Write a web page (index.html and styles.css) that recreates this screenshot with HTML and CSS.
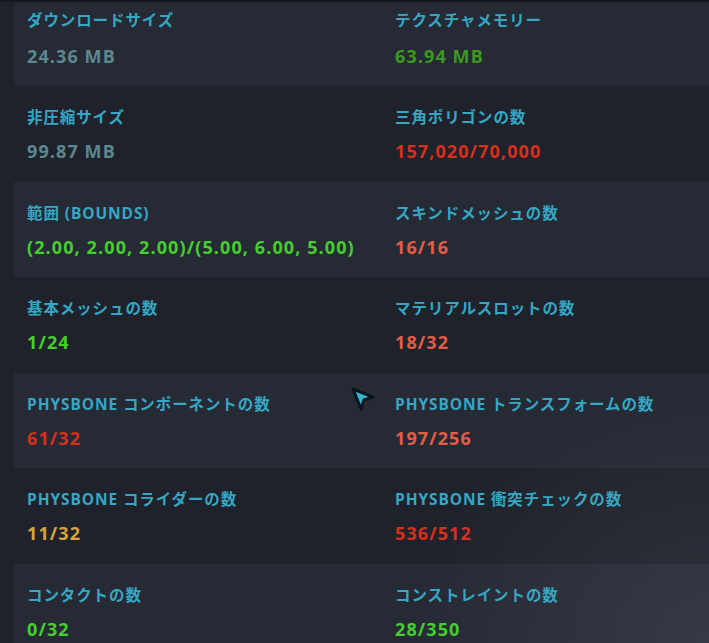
FILE: index.html
```html
<!DOCTYPE html>
<html lang="ja">
<head>
<meta charset="utf-8">
<link rel="stylesheet" href="styles.css">
</head>
<body>
<div class="topbar"></div>
<div class="list">
  <div class="row row--odd row--first">
    <div class="cell"><div class="label">ダウンロードサイズ</div><div class="value v-gray">24.36 MB</div></div>
    <div class="cell"><div class="label">テクスチャメモリー</div><div class="value v-dgreen">63.94 MB</div></div>
  </div>
  <div class="row">
    <div class="cell"><div class="label">非圧縮サイズ</div><div class="value v-gray">99.87 MB</div></div>
    <div class="cell"><div class="label">三角ポリゴンの数</div><div class="value v-red">157,020/70,000</div></div>
  </div>
  <div class="row row--odd">
    <div class="cell"><div class="label">範囲 (BOUNDS)</div><div class="value v-green">(2.00, 2.00, 2.00)/(5.00, 6.00, 5.00)</div></div>
    <div class="cell"><div class="label">スキンドメッシュの数</div><div class="value v-salmon">16/16</div></div>
  </div>
  <div class="row">
    <div class="cell"><div class="label">基本メッシュの数</div><div class="value v-green">1/24</div></div>
    <div class="cell"><div class="label">マテリアルスロットの数</div><div class="value v-salmon">18/32</div></div>
  </div>
  <div class="row row--odd">
    <div class="cell"><div class="label">PHYSBONE コンポーネントの数</div><div class="value v-red">61/32</div></div>
    <div class="cell"><div class="label">PHYSBONE トランスフォームの数</div><div class="value v-salmon">197/256</div></div>
  </div>
  <div class="row">
    <div class="cell"><div class="label">PHYSBONE コライダーの数</div><div class="value v-yellow">11/32</div></div>
    <div class="cell"><div class="label">PHYSBONE 衝突チェックの数</div><div class="value v-red">536/512</div></div>
  </div>
  <div class="row row--odd">
    <div class="cell"><div class="label">コンタクトの数</div><div class="value v-green">0/32</div></div>
    <div class="cell"><div class="label">コンストレイントの数</div><div class="value v-green">28/350</div></div>
  </div>
</div>
<svg class="cursor" width="26" height="26" viewBox="0 0 26 26">
  <path d="M3 3 L23 11 L14 14 L11 23 Z" fill="#39b3d3" stroke="#0b161b" stroke-width="3" stroke-linejoin="round"/>
</svg>
<div class="vignette"></div>
</body>
</html>
```
FILE: styles.css
```css
html, body {
  margin: 0;
  padding: 0;
}
body {
  width: 709px;
  height: 643px;
  overflow: hidden;
  background: #1f222a;
  font-family: "Open Sans", "Noto Sans CJK JP", sans-serif;
  font-weight: 700;
  position: relative;
}
.topbar {
  height: 2px;
  background: #16181d;
}
.row {
  height: 95.5px;
  display: grid;
  grid-template-columns: 368px 1fr;
  padding-left: 13px;
  margin-left: 14px;
  box-sizing: border-box;
}
.row--odd {
  background: #262a34;
}
.row--first {
  height: 84px;
}
.cell {
  padding-top: 21px;
  white-space: nowrap;
}
.row--first .cell {
  padding-top: 8px;
}
.label {
  font-size: 15.5px;
  line-height: 20px;
  letter-spacing: 0.9px;
  color: #35a7c5;
}
.value {
  margin-top: 12px;
  font-size: 18px;
  line-height: 24px;
  letter-spacing: 1.1px;
}
.row--first .value {
  margin-top: 14px;
}
.v-gray { color: #5c8891; }
.v-dgreen { color: #3b9a1e; }
.v-red { color: #d6301c; }
.v-salmon { color: #e45c45; }
.v-green { color: #44cf2c; }
.v-yellow { color: #d9a23a; }
.cursor {
  position: absolute;
  left: 350px;
  top: 386px;
}
.vignette {
  position: absolute;
  inset: 0;
  pointer-events: none;
  background: radial-gradient(ellipse 300px 260px at 709px 643px, rgba(110,120,140,0.2), rgba(110,120,140,0) 100%);
}
```
